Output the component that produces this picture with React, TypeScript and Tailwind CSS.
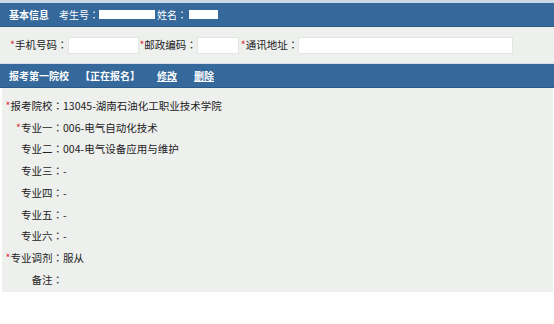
import React from "react";

const font = {
  fontFamily: '"Noto Sans CJK SC", "Liberation Sans", sans-serif',
};

// 报考信息行
const rows: { label: string; value: string; required?: boolean }[] = [
  { label: "报考院校", value: "13045-湖南石油化工职业技术学院", required: true },
  { label: "专业一", value: "006-电气自动化技术", required: true },
  { label: "专业二", value: "004-电气设备应用与维护" },
  { label: "专业三", value: "-" },
  { label: "专业四", value: "-" },
  { label: "专业五", value: "-" },
  { label: "专业六", value: "-" },
  { label: "专业调剂", value: "服从", required: true },
  { label: "备注", value: "" },
];

function Star() {
  return <span className="text-[#e0303a]">*</span>;
}

// 全角冒号居中显示
function Colon() {
  return (
    <span className="font-['Noto_Sans_CJK_JP','Noto_Sans_CJK_SC',sans-serif]">
      ：
    </span>
  );
}

export default function App() {
  return (
    <div
      className="w-[554px] h-[324px] bg-white text-[10.5px] text-[#222] overflow-hidden"
      style={font}
    >
      <div className="h-[3px] bg-[#cbd8e6]" />
      {/* 基本信息 */}
      <div className="h-[24px] bg-[#35689b] border-b border-[#2c5a88] flex items-center pl-[9px] text-white text-[10px]">
        <span className="font-bold">基本信息</span>
        <span className="ml-[10px]">
          考生号
          <Colon />
        </span>
        <span className="w-[56px] h-[9px] bg-white" />
        <span className="ml-[2px]">
          姓名
          <Colon />
        </span>
        <span className="w-[29px] h-[9px] bg-white ml-[2px]" />
      </div>
      <div className="h-[36px] bg-[#eef0ee] flex items-center pl-[10px]">
        <Star />
        <span>
          手机号码
          <Colon />
        </span>
        <span className="w-[71px] h-[17px] bg-white border border-[#e4e6e4] ml-[1px]" />
        <Star />
        <span>
          邮政编码
          <Colon />
        </span>
        <span className="w-[42px] h-[17px] bg-white border border-[#e4e6e4]" />
        <span className="ml-[2px]">
          <Star />
        </span>
        <span>
          通讯地址
          <Colon />
        </span>
        <span className="w-[215px] h-[17px] bg-white border border-[#e4e6e4]" />
      </div>
      {/* 报考第一院校 */}
      <div className="h-[25px] bg-[#35689b] border-t border-[#d6e0ea] border-b border-b-[#2c5a88] flex items-center pl-[9px] text-white font-bold text-[10px]">
        <span>报考第一院校</span>
        <span className="ml-[11px]">【正在报名】</span>
        <span className="ml-[17px] underline">修改</span>
        <span className="ml-[17px] underline">删除</span>
      </div>
      <div className="ml-[2px] w-[551px] h-[204px] bg-[#eef0ee] pt-[7px]">
        {rows.map((r) => (
          <div key={r.label} className="flex leading-[21.7px]">
            <div className="w-[61px] text-right">
              {r.required && <Star />}
              {r.label}
              <Colon />
            </div>
            <div>{r.value}</div>
          </div>
        ))}
      </div>
    </div>
  );
}
